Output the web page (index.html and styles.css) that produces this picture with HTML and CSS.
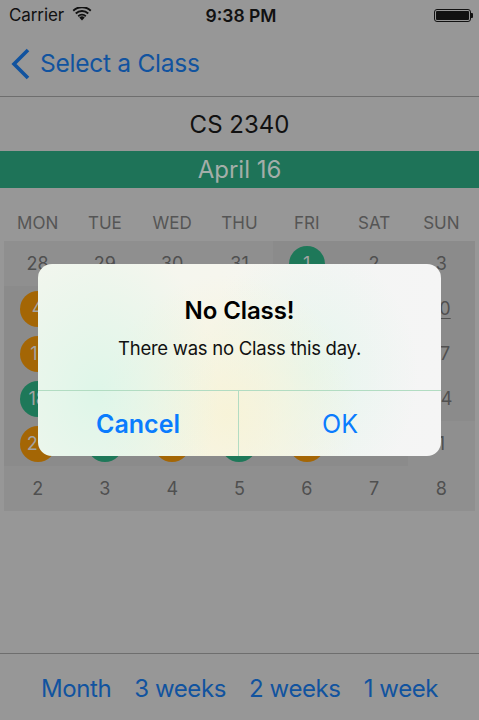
FILE: index.html
```html
<!DOCTYPE html>
<html>
<head>
<meta charset="utf-8">
<link rel="stylesheet" href="styles.css">
</head>
<body>
<div class="screen">
  <div class="status">
    <div class="status-left">
      <span class="carrier">Carrier</span>
      <svg class="wifi" width="20" height="14" viewBox="0 0 20 14">
        <path d="M10 13.5 L7.3 10.4 A4 4 0 0 1 12.7 10.4 Z" fill="#111"/>
        <path d="M5.6 8.5 A6.6 6.6 0 0 1 14.4 8.5 L13.2 9.9 A4.8 4.8 0 0 0 6.8 9.9 Z" fill="#111"/>
        <path d="M3.1 5.7 A10.2 10.2 0 0 1 16.9 5.7 L15.6 7.2 A8.3 8.3 0 0 0 4.4 7.2 Z" fill="#111"/>
        <path d="M0.6 2.9 A13.8 13.8 0 0 1 19.4 2.9 L18.1 4.4 A11.9 11.9 0 0 0 1.9 4.4 Z" fill="#111"/>
      </svg>
    </div>
    <div class="time">9:38 PM</div>
    <div class="status-right">
      <div class="battery"><div class="battery-fill"></div></div>
      <div class="battery-nub"></div>
    </div>
  </div>
  <nav class="navbar">
    <svg class="chevron" width="20" height="32" viewBox="0 0 20 32">
      <path d="M17 2 L3 16 L17 30" fill="none" stroke="#11539f" stroke-width="3.6" stroke-linecap="butt" stroke-linejoin="miter"/>
    </svg>
    <span class="back-label">Select a Class</span>
  </nav>
  <main class="content">
    <h1 class="course">CS 2340</h1>
    <div class="month-band">April 16</div>
    <div class="weekdays">
      <span>MON</span><span>TUE</span><span>WED</span><span>THU</span><span>FRI</span><span>SAT</span><span>SUN</span>
    </div>
    <div class="grid">
      <div class="cell other"><span class="num">28</span></div>
      <div class="cell other"><span class="num">29</span></div>
      <div class="cell other"><span class="num">30</span></div>
      <div class="cell other"><span class="num">31</span></div>
      <div class="cell"><span class="num dot green">1</span></div>
      <div class="cell"><span class="num">2</span></div>
      <div class="cell"><span class="num">3</span></div>

      <div class="cell"><span class="num dot orange">4</span></div>
      <div class="cell"><span class="num dot green">5</span></div>
      <div class="cell"><span class="num dot orange">6</span></div>
      <div class="cell"><span class="num dot green">7</span></div>
      <div class="cell"><span class="num dot orange">8</span></div>
      <div class="cell"><span class="num">9</span></div>
      <div class="cell"><span class="num today">10</span></div>

      <div class="cell"><span class="num dot orange">11</span></div>
      <div class="cell"><span class="num dot green">12</span></div>
      <div class="cell"><span class="num dot orange">13</span></div>
      <div class="cell"><span class="num dot green">14</span></div>
      <div class="cell"><span class="num dot orange">15</span></div>
      <div class="cell"><span class="num">16</span></div>
      <div class="cell"><span class="num">17</span></div>

      <div class="cell"><span class="num dot green">18</span></div>
      <div class="cell"><span class="num dot orange">19</span></div>
      <div class="cell"><span class="num dot green">20</span></div>
      <div class="cell"><span class="num dot orange">21</span></div>
      <div class="cell"><span class="num dot green">22</span></div>
      <div class="cell"><span class="num">23</span></div>
      <div class="cell"><span class="num">24</span></div>

      <div class="cell"><span class="num dot orange">25</span></div>
      <div class="cell"><span class="num dot green">26</span></div>
      <div class="cell"><span class="num dot orange">27</span></div>
      <div class="cell"><span class="num dot green">28</span></div>
      <div class="cell"><span class="num dot orange">29</span></div>
      <div class="cell"><span class="num">30</span></div>
      <div class="cell other"><span class="num">1</span></div>

      <div class="cell other"><span class="num">2</span></div>
      <div class="cell other"><span class="num">3</span></div>
      <div class="cell other"><span class="num">4</span></div>
      <div class="cell other"><span class="num">5</span></div>
      <div class="cell other"><span class="num">6</span></div>
      <div class="cell other"><span class="num">7</span></div>
      <div class="cell other"><span class="num">8</span></div>
    </div>
  </main>
  <footer class="toolbar">
    <span class="tool">Month</span>
    <span class="tool">3 weeks</span>
    <span class="tool">2 weeks</span>
    <span class="tool">1 week</span>
  </footer>
</div>

<div class="alert" role="alertdialog">
  <div class="alert-body">
    <div class="alert-title">No Class!</div>
    <div class="alert-message">There was no Class this day.</div>
  </div>
  <div class="alert-actions">
    <button class="alert-btn cancel">Cancel</button>
    <button class="alert-btn ok">OK</button>
  </div>
</div>
</body>
</html>
```

FILE: styles.css
```css
* { box-sizing: border-box; }
html, body {
  margin: 0;
  padding: 0;
  width: 479px;
  height: 720px;
  overflow: hidden;
  background: #979797;
  font-family: Inter, "Open Sans", "Liberation Sans", sans-serif;
}
.screen {
  width: 479px;
  height: 720px;
  display: flex;
  flex-direction: column;
  background: #979797;
}
.status {
  height: 30px;
  display: flex;
  align-items: center;
  justify-content: space-between;
  padding: 0 6px 0 9px;
}
.status-left {
  display: flex;
  align-items: center;
  gap: 8px;
  width: 120px;
}
.carrier {
  font-size: 17px;
  color: #111;
  letter-spacing: -0.1px;
}
.wifi { margin-top: -2px; }
.time {
  font-size: 17.5px;
  font-weight: 600;
  color: #111;
}
.status-right {
  width: 120px;
  display: flex;
  align-items: center;
  justify-content: flex-end;
}
.battery {
  width: 37px;
  height: 13px;
  border: 1px solid #111;
  border-radius: 3px;
  padding: 1px;
}
.battery-fill {
  width: 100%;
  height: 100%;
  background: #111;
  border-radius: 1px;
}
.battery-nub {
  width: 2px;
  height: 5px;
  background: #111;
  border-radius: 0 1px 1px 0;
}
.navbar {
  height: 67px;
  display: flex;
  align-items: center;
  padding-left: 11px;
  gap: 9px;
  border-bottom: 1px solid #6e6e6e;
}
.chevron { margin-top: 1px; }
.back-label {
  font-size: 24.6px;
  color: #11539f;
  letter-spacing: -0.3px;
}
.content {
  flex: 1;
  display: flex;
  flex-direction: column;
}
.course {
  margin: 0;
  height: 54px;
  display: flex;
  align-items: center;
  justify-content: center;
  font-size: 24px;
  font-weight: 400;
  color: #111;
}
.month-band {
  height: 37px;
  background: #1e7358;
  color: #a4aea9;
  font-size: 24px;
  display: flex;
  align-items: center;
  justify-content: center;
}
.weekdays {
  height: 53px;
  display: grid;
  grid-template-columns: repeat(7, 1fr);
  padding: 0 4px 8px;
  align-items: end;
  text-align: center;
  font-size: 17px;
  color: #555;
}
.grid {
  margin: 0 4px;
  display: grid;
  grid-template-columns: repeat(7, 1fr);
  grid-auto-rows: 45px;
}
.cell {
  background: #8b8b8b;
  display: flex;
  align-items: center;
  justify-content: center;
}
.cell.other { background: #8f8f8f; }
.num {
  font-size: 18px;
  color: #505050;
}
.num.today {
  text-decoration: underline;
  text-underline-offset: 3px;
}
.num.dot {
  width: 36px;
  height: 36px;
  border-radius: 50%;
  display: flex;
  align-items: center;
  justify-content: center;
  color: #a3a3a3;
}
.dot.green { background: #1e7859; }
.dot.orange { background: #a46605; }
.toolbar {
  height: 67px;
  border-top: 1px solid #6e6e6e;
  display: flex;
  align-items: center;
  justify-content: center;
  gap: 23px;
  padding-top: 2px;
}
.tool {
  font-size: 24px;
  color: #11539f;
  letter-spacing: -0.4px;
}
.alert {
  position: absolute;
  left: 38px;
  top: 264px;
  width: 403px;
  height: 192px;
  border-radius: 14px;
  overflow: hidden;
  display: flex;
  flex-direction: column;
  background:
    radial-gradient(ellipse 120px 160px at 60px 130px, rgba(220, 246, 232, 0.9), rgba(220, 246, 232, 0) 100%),
    radial-gradient(ellipse 130px 140px at 190px 150px, rgba(248, 243, 214, 0.9), rgba(248, 243, 214, 0) 100%),
    radial-gradient(ellipse 110px 130px at 270px 110px, rgba(226, 246, 236, 0.8), rgba(226, 246, 236, 0) 100%),
    linear-gradient(90deg, #f3f6ee 0%, #f6f6ee 45%, #f4f5f4 75%, #f5f5f5 100%);
}
.alert-body {
  height: 127px;
  display: flex;
  flex-direction: column;
  align-items: center;
  padding-top: 32px;
  gap: 12px;
  border-bottom: 1px solid #b2dcc2;
}
.alert-title {
  font-size: 24px;
  font-weight: 600;
  color: #000;
  letter-spacing: -0.1px;
}
.alert-message {
  font-size: 18.5px;
  color: #111;
  letter-spacing: -0.25px;
}
.alert-actions {
  flex: 1;
  display: grid;
  grid-template-columns: 201px 1fr;
}
.alert-btn {
  border: 0;
  background: transparent;
  font-family: inherit;
  font-size: 25px;
  color: #0a7cfe;
  padding: 0;
  margin: 0;
}
.alert-btn.cancel {
  font-weight: 600;
  border-right: 1px solid #b2dcc2;
}
```
